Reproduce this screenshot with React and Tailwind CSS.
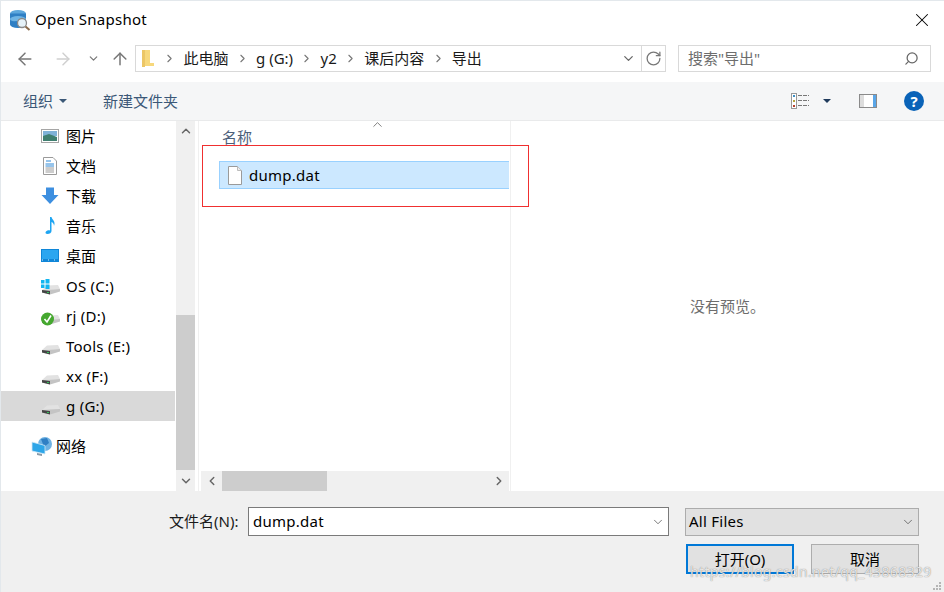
import { ArrowLeft, ArrowRight, ArrowUp, ChevronDown, ChevronLeft, ChevronRight, ChevronUp, RotateCw, Search, X } from "lucide-react";

const font = "font-['Noto_Sans','Noto_Sans_CJK_SC',sans-serif]";

function Drive({ badge }) {
  return (
    <svg width="20" height="20" viewBox="0 0 20 20">
      <path d="M1 14 L6 9.5 L17 9 L19 13 Z" fill="#e2e2e2" />
      <path d="M1 14 L19 13 V15.5 L9 18.5 L1 16.5 Z" fill="#c4c4c4" />
      <path d="M1 14 L9 15 V18.5 L1 16.5 Z" fill="#454545" />
      <rect x="6" y="16" width="2" height="1" fill="#35c35a" />
      {badge === "win" && (
        <g fill="#12b6f0">
          <rect x="0" y="4" width="3.5" height="3.5" />
          <rect x="4.5" y="3" width="4" height="4.5" />
          <rect x="0" y="8.5" width="3.5" height="3.5" />
          <rect x="4.5" y="8.5" width="4" height="4.5" />
        </g>
      )}
      {badge === "check" && (
        <g>
          <circle cx="6.5" cy="13" r="6.5" fill="#45a82f" />
          <path d="M3.5 13 L6 16 L10 9.5" stroke="#fff" strokeWidth="1.6" fill="none" />
        </g>
      )}
    </svg>
  );
}

const navItems = [
  {
    label: "图片",
    icon: (
      <svg width="18" height="15" viewBox="0 0 18 15">
        <rect x="0.5" y="0.5" width="17" height="13" fill="#fff" stroke="#a5a5a5" />
        <rect x="2" y="2" width="14" height="5" fill="#7fb2d8" />
        <path d="M2 7 L8 5 L16 8 V12 H2 Z" fill="#3f7f70" />
      </svg>
    ),
  },
  {
    label: "文档",
    icon: (
      <svg width="18" height="19" viewBox="0 0 18 19">
        <path d="M2.5 .5 H12 L15.5 4 V17.5 H2.5 Z" fill="#fff" stroke="#9a9a9a" />
        <path d="M5 4 H10 M4.5 7 H13 M4.5 9 H13" stroke="#2e8ad8" />
        <path d="M4.5 11 H13 M4.5 13 H13 M4.5 15 H13" stroke="#9a9a9a" />
      </svg>
    ),
  },
  {
    label: "下载",
    icon: (
      <svg width="18" height="18" viewBox="0 0 18 18">
        <path d="M5 0.5 H13 V8 H17.5 L9 17 L.5 8 H5 Z" fill="#3d8fe0" />
      </svg>
    ),
  },
  {
    label: "音乐",
    icon: (
      <svg width="18" height="18" viewBox="0 0 18 18">
        <path d="M9 0 H10.5 C11 3 15 4 13 9 C13 7 12 5.5 10.5 5 V14 C10.5 16 8.5 17 6.5 17 C4.5 17 4 15.5 5 14.5 C6 13.5 8 13 9 13.5 Z" fill="#1ea5f2" />
      </svg>
    ),
  },
  {
    label: "桌面",
    icon: (
      <svg width="18" height="14" viewBox="0 0 18 14">
        <rect width="18" height="13" fill="#0f86d8" />
        <path d="M1 1 H17 V10 H1 Z" fill="#2ba6f0" />
        <path d="M1 11 H17" stroke="#d8effc" strokeDasharray="1 5" />
      </svg>
    ),
  },
  { label: "OS (C:)", latin: true, icon: <Drive badge="win" /> },
  { label: "rj (D:)", latin: true, icon: <Drive badge="check" /> },
  { label: "Tools (E:)", latin: true, icon: <Drive /> },
  { label: "xx (F:)", latin: true, icon: <Drive /> },
  { label: "g (G:)", latin: true, icon: <Drive />, selected: true },
];

function NavRow({ item }) {
  return (
    <div className={`flex h-[30px] items-center pl-[40px] ${item.selected ? "bg-[#d9d9d9]" : ""}`}>
      <span className="flex w-[25px] shrink-0 justify-start">{item.icon}</span>
      <span className={`text-[15px] text-black ${item.latin ? "tracking-[0.25px]" : ""}`}>{item.label}</span>
    </div>
  );
}

function Crumb({ children }) {
  return (
    <>
      <ChevronRight size={13} className="mx-[7.25px] shrink-0 text-[#777]" />
      <span className="text-[15px] text-[#1a1a1a]">{children}</span>
    </>
  );
}

export default function App() {
  return (
    <div className={`relative h-[592px] w-[944px] overflow-hidden border-t border-l border-[#e3e8ec] bg-white ${font}`}>
      {/* title */}
      <div className="-ml-[1px] flex h-[37px] items-center pl-[9px]">
        <svg width="22" height="22" viewBox="0 0 22 22">
          <ellipse cx="9" cy="4.5" rx="8" ry="3.5" fill="#5da7dc" />
          <rect x="1" y="4.5" width="16" height="11" fill="#2f7fc4" />
          <ellipse cx="9" cy="10" rx="8" ry="3" fill="#6fb4e4" />
          <ellipse cx="9" cy="15.5" rx="8" ry="3.5" fill="#2f7fc4" />
          <circle cx="13" cy="14" r="4.5" fill="#e6f2f8" stroke="#8a8a8a" strokeWidth="1.3" />
          <path d="M16.5 17.5 L20.5 21" stroke="#8a6a4a" strokeWidth="2" />
        </svg>
        <span className="ml-[4px] text-[15px] tracking-[0.25px] text-black">Open Snapshot</span>
        <X size={22} strokeWidth={1.1} className="ml-auto mr-[11px] text-black" />
      </div>

      {/* address row */}
      <div className="-ml-[1px] flex h-[44px] items-start pt-[7px]">
        <div className="flex h-[27px] w-[135px] shrink-0 items-center pl-[15px] text-[#777]">
          <ArrowLeft size={20} strokeWidth={1.8} />
          <ArrowRight size={20} strokeWidth={1.8} className="ml-[18px] text-[#d0d0d0]" />
          <ChevronDown size={13} strokeWidth={2.2} className="ml-[14px]" />
          <ArrowUp size={20} strokeWidth={1.8} className="ml-[10px]" />
        </div>
        <div className="flex h-[27px] w-[531px] shrink-0 items-center border border-[#d9d9d9]">
          <svg width="13" height="17" viewBox="0 0 13 17" className="ml-[5px] shrink-0">
            <path d="M1 0 H9 V13 H13 V16 H1 Z" fill="#f7d87c" />
            <path d="M1 0 H4 V17 H1 Z" fill="#ecc665" />
          </svg>
          <span className="ml-[2px] flex items-center">
            <Crumb>此电脑</Crumb>
            <Crumb>g (G:)</Crumb>
            <Crumb>y2</Crumb>
            <Crumb>课后内容</Crumb>
            <Crumb>导出</Crumb>
          </span>
          <ChevronDown size={15} strokeWidth={2} className="ml-auto mr-[5px] text-[#666]" />
          <span className="flex h-full w-[24px] items-center justify-center border-l border-[#d9d9d9]">
            <RotateCw size={17} strokeWidth={1.8} className="text-[#777]" />
          </span>
        </div>
        <div className="ml-[12px] flex h-[27px] w-[253px] shrink-0 items-center border border-[#d9d9d9] pl-[9px] pr-[11px]">
          <span className="text-[15px] text-[#6d6d6d]">搜索"导出"</span>
          <Search size={15} strokeWidth={2} className="ml-auto -scale-x-100 text-[#666]" />
        </div>
      </div>

      {/* toolbar */}
      <div className="-ml-[1px] flex h-[39px] items-center border-b border-[#e9eaeb] bg-[#f5f6f7] pl-[23px]">
        <span className="text-[15px] text-[#3b5877]">组织</span>
        <span className="ml-[6px] h-0 w-0 border-x-[4px] border-t-[4px] border-x-transparent border-t-[#3b5877]" />
        <span className="ml-[36px] text-[15px] text-[#3b5877]">新建文件夹</span>
        <div className="ml-auto flex items-center pr-[20px]">
          <svg width="19" height="16" viewBox="0 0 19 16">
            <rect x=".5" y=".5" width="5" height="15" fill="#fff" stroke="#999" />
            <rect x="2" y="2" width="2" height="2" fill="#3d8fc4" />
            <rect x="2" y="7" width="2" height="2" fill="#b5a23c" />
            <rect x="2" y="12" width="2" height="2" fill="#b5402c" />
            <path d="M7 2.5 H18 M7 7.5 H18 M7 12.5 H18" stroke="#777" strokeDasharray="4 1" />
          </svg>
          <span className="ml-[13px] h-0 w-0 border-x-[4px] border-t-[4px] border-x-transparent border-t-[#1f3a5c]" />
          <svg width="18" height="14" viewBox="0 0 18 14" className="ml-[28px]">
            <rect x=".5" y=".5" width="17" height="13" fill="#fff" stroke="#8a8a8a" />
            <rect x="1" y="1" width="4" height="12" fill="#ddd" />
            <rect x="14" y="1" width="3" height="12" fill="#5aa6e8" />
          </svg>
          <span className="ml-[27px] flex h-[20px] w-[20px] items-center justify-center rounded-full bg-[#0a63b8] text-[15px] font-bold leading-none text-white">?</span>
        </div>
      </div>

      {/* main */}
      <div className="flex h-[370px]">
        <div className="w-[175px] shrink-0 pr-[1px]">
          {navItems.map((item) => (
            <NavRow key={item.label} item={item} />
          ))}
          <div className="mt-[10px] flex h-[30px] items-center pl-[29px]">
            <svg width="24" height="22" viewBox="0 0 24 22" className="mr-[2px] shrink-0">
              <circle cx="15" cy="9" r="7" fill="#6fb2e2" />
              <path d="M11 4 L17 3 L19 8 L14 12 Z" fill="#2f7fc4" />
              <path d="M2 7 L15 10.5 V19 L2 16 Z" fill="#2ea6e8" stroke="#d2e8f6" strokeWidth=".8" />
              <path d="M7 18 L12 19 V21 L7 20 Z" fill="#8a9aa8" />
            </svg>
            <span className="text-[15px] text-black">网络</span>
          </div>
        </div>

        {/* nav scrollbar */}
        <div className="flex w-[19px] shrink-0 flex-col bg-[#f0f0f0]">
          <div className="flex h-[20px] items-center justify-center">
            <ChevronUp size={14} strokeWidth={2.5} className="text-[#666]" />
          </div>
          <div className="h-[174px]" />
          <div className="h-[155px] bg-[#cdcdcd]" />
          <div className="flex h-[21px] items-center justify-center">
            <ChevronDown size={14} strokeWidth={2.5} className="text-[#666]" />
          </div>
        </div>

        {/* file list */}
        <div className="ml-[3px] w-[3px] shrink-0 border-l border-[#f0f0f0]" />
        <div className="flex w-[308px] shrink-0 flex-col">
          <div className="relative h-[40px] pl-[21px] pt-[5px] text-[15px] text-[#4c607a]">
            名称
            <ChevronUp size={15} strokeWidth={1.2} className="absolute left-[169px] top-[-4px] text-[#555]" />
          </div>
          <div className="ml-[18px] flex h-[28px] items-center border border-r-0 border-[#99d1ff] bg-[#cce8ff] pl-[7px]">
            <svg width="16" height="19" viewBox="0 0 16 19">
              <path d="M1.5 .5 H10.5 L14.5 4.5 V18.5 H1.5 Z" fill="#fff" stroke="#9a9a9a" />
              <path d="M10.5 .5 V4.5 H14.5" fill="#eee" stroke="#bbb" />
            </svg>
            <span className="ml-[6px] text-[15px] tracking-[0.25px] text-black">dump.dat</span>
          </div>
          <div className="mt-auto flex h-[20px] items-center bg-[#f0f0f0] text-[#666]">
            <span className="flex w-[21px] items-center justify-center"><ChevronLeft size={14} strokeWidth={2.5} /></span>
            <span className="h-full w-[105px] bg-[#cdcdcd]" />
            <span className="ml-auto flex w-[21px] items-center justify-center"><ChevronRight size={14} strokeWidth={2.5} /></span>
          </div>
        </div>

        {/* preview */}
        <div className="ml-[1px] flex flex-1 items-center justify-center border-l border-[#f0f0f0]">
          <span className="text-[15px] text-[#6d6d6d]">没有预览。</span>
        </div>
      </div>

      {/* footer */}
      <div className="-ml-[1px] h-[101px] bg-[#f0f0f0] pt-[16px]">
        <div className="flex h-[29px] items-center">
          <span className="ml-[169px] w-[79px] text-[15px] text-[#1a1a1a]">文件名(N):</span>
          <div className="flex h-[29px] w-[421px] items-center border border-[#7a7a7a] bg-white pl-[4px]">
            <span className="text-[15px] tracking-[0.25px] text-black">dump.dat</span>
            <ChevronDown size={14} strokeWidth={1.2} className="ml-auto mr-[3px] text-[#444]" />
          </div>
          <div className="ml-[16px] flex h-[28px] w-[234px] items-center border border-[#acacac] bg-[#e1e1e1] pl-[3px]">
            <span className="text-[15px] tracking-[0.25px] text-black">All Files</span>
            <ChevronDown size={14} strokeWidth={1.2} className="ml-auto mr-[3px] text-[#444]" />
          </div>
        </div>
        <div className="mt-[8px] flex">
          <div className="ml-[686px] flex h-[30px] w-[108px] items-center justify-center border-2 border-[#0078d7] bg-[#e1e1e1] text-[15px] text-black">打开(O)</div>
          <div className="ml-[17px] flex h-[30px] w-[108px] items-center justify-center border border-[#adadad] bg-[#e1e1e1] text-[15px] text-black">取消</div>
        </div>
      </div>

      {/* annotation + watermark */}
      <div className="absolute left-[201px] top-[144px] h-[62px] w-[327px] border border-[#f03030]" />
      <div className="absolute left-[689px] top-[564px] text-[14px] leading-none tracking-[0.35px] text-white/80 [text-shadow:0_0_1px_#666]">https://blog.csdn.net/qq_43868329</div>
      <svg width="10" height="10" viewBox="0 0 10 10" className="absolute bottom-[1px] right-[2px]">
        <g fill="#b5b5b5">
          <rect x="7" y="1" width="2" height="2" />
          <rect x="4" y="4" width="2" height="2" />
          <rect x="7" y="4" width="2" height="2" />
          <rect x="1" y="7" width="2" height="2" />
          <rect x="4" y="7" width="2" height="2" />
          <rect x="7" y="7" width="2" height="2" />
        </g>
      </svg>
    </div>
  );
}
